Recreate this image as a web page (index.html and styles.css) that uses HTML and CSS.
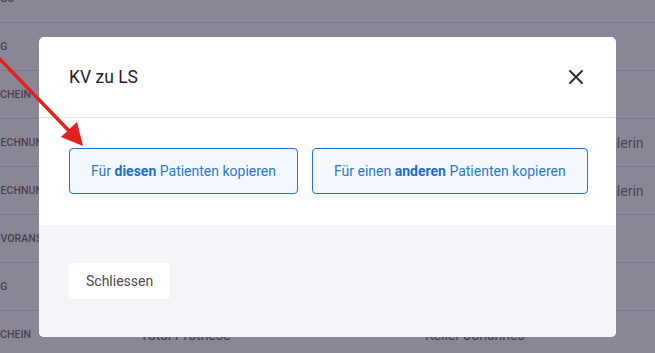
FILE: index.html
```html
<!DOCTYPE html>
<html lang="de">
<head>
  <meta charset="UTF-8" />
  <meta name="viewport" content="width=device-width, initial-scale=1.0" />
  <title>KV zu LS</title>
  <link rel="stylesheet" href="styles.css">
</head>
<body>
  <!-- Table behind the dialog -->
  <div class="list">
    <div class="row"><span class="type">AUFTRAGS</span><span></span><span></span><span></span></div>
    <div class="row"><span class="type">AUFTRAG</span><span></span><span></span><span></span></div>
    <div class="row"><span class="type">LIEFERSCHEIN</span><span></span><span></span><span></span></div>
    <div class="row"><span class="type">LABORRECHNUNG</span><span></span><span></span><span class="muted">Malerin</span></div>
    <div class="row"><span class="type">LABORRECHNUNG</span><span></span><span></span><span class="muted">Malerin</span></div>
    <div class="row"><span class="type">KOSTENVORANSCHLAG</span><span></span><span></span><span></span></div>
    <div class="row"><span class="type">AUFTRAG</span><span></span><span></span><span></span></div>
    <div class="row"><span class="type">LIEFERSCHEIN</span><span>Total Prothese</span><span>Keller Johannes</span><span></span></div>
  </div>

  <!-- Dialog -->
  <div class="modal">
    <div class="modal-header">
      <h2>KV zu LS</h2>
      <button class="close" aria-label="Schliessen">
        <svg width="14" height="14" viewBox="0 0 14 14">
          <path d="M1 1 L13 13 M13 1 L1 13" stroke="#2f3136" stroke-width="2" stroke-linecap="round" />
        </svg>
      </button>
    </div>
    <div class="modal-body">
      <button class="btn-copy">Für <b>diesen</b> Patienten kopieren</button>
      <button class="btn-copy">Für einen <b>anderen</b> Patienten kopieren</button>
    </div>
    <div class="modal-footer">
      <button class="btn-close">Schliessen</button>
    </div>
  </div>

  <!-- Hint arrow -->
  <svg class="arrow" width="655" height="353" viewBox="0 0 655 353">
    <line x1="-4" y1="55" x2="72" y2="134" stroke="#e2201c" stroke-width="3.5" />
    <polygon points="83,146 61,137 77,122" fill="#e2201c" />
  </svg>
</body>
</html>
```

FILE: styles.css
```css
html, body {
  margin: 0;
  padding: 0;
  width: 100%;
  height: 100%;
  overflow: hidden;
  font-family: Roboto, "Noto Sans", sans-serif;
}

body {
  background-color: #8a8696;
  position: relative;
}

.list {
  margin-top: -25px;
  margin-left: -40px;
}

.row {
  display: grid;
  grid-template-columns: 180px 285px 172px 1fr;
  align-items: center;
  height: 48px;
  box-sizing: border-box;
  border-bottom: 1px solid #7c788a;
  color: #464252;
  font-size: 14px;
  white-space: nowrap;
}

.row .type {
  font-size: 10.5px;
  font-weight: 500;
  letter-spacing: 0.1px;
}

.row .muted {
  color: #4a4656;
}

.modal {
  position: absolute;
  top: 37px;
  left: 39px;
  width: 577px;
  background: #fff;
  border-radius: 5px;
  overflow: hidden;
}

.modal-header {
  display: flex;
  align-items: center;
  justify-content: space-between;
  height: 80px;
  padding: 0 33px 0 30px;
  border-bottom: 1px solid #e1e0e8;
}

.modal-header h2 {
  margin: 0;
  font-size: 17.5px;
  font-weight: 400;
  color: #1f2231;
}

.close {
  display: flex;
  padding: 0;
  border: none;
  background: none;
  cursor: pointer;
}

.modal-body {
  display: flex;
  gap: 14px;
  padding: 30px 30px 31px;
}

.btn-copy {
  height: 46px;
  padding: 0 21px;
  border: 1px solid #1f74d6;
  border-radius: 4px;
  background: #f4f9ff;
  color: #2a78d3;
  font-family: inherit;
  font-size: 14px;
  white-space: nowrap;
  cursor: pointer;
}

.btn-copy b {
  font-weight: 700;
  color: #1d6dcc;
}

.modal-footer {
  background: #f4f5f9;
  padding: 38px 30px;
}

.btn-close {
  height: 36px;
  padding: 0 17px;
  border: none;
  border-radius: 4px;
  background: #fff;
  color: #4a4a56;
  font-family: inherit;
  font-size: 14px;
  white-space: nowrap;
  cursor: pointer;
}

.arrow {
  position: absolute;
  top: 0;
  left: 0;
  pointer-events: none;
}
```
